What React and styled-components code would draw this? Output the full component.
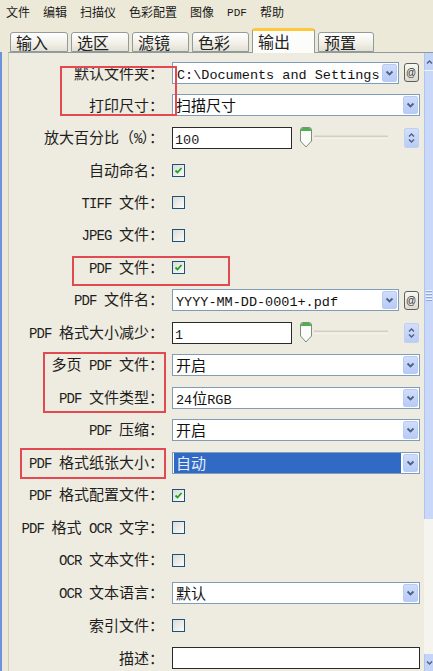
import React from 'react'
import styled, { createGlobalStyle } from 'styled-components'

const Global = createGlobalStyle`
  html, body { margin: 0; padding: 0; background: #ECE9D8; }
  body { width: 433px; height: 671px; overflow: hidden; }
`

const CJK = `"Noto Sans CJK SC", sans-serif`

// page frame
const Page = styled.div`
  position: relative;
  width: 433px;
  height: 671px;
  overflow: hidden;
  background: #ECE9D8;
  font-family: ${CJK};
  color: #1a1a1a;
`

const MenuBar = styled.div`
  display: flex;
  align-items: center;
  gap: 13px;
  height: 24px;
  padding: 0 6px;
  font-size: 12px;
`

const MenuItem = styled.span`
  line-height: 24px;
`

const TabStrip = styled.div`
  display: flex;
  align-items: flex-end;
  gap: 3px;
  height: 28px;
  padding-left: 10px;
  position: relative;
  z-index: 2;
`

const Tab = styled.div`
  box-sizing: border-box;
  width: ${p => p.w}px;
  height: ${p => (p.active ? 25 : 20)}px;
  margin-bottom: ${p => (p.active ? -1 : 0)}px;
  padding-left: 5px;
  border: 1px solid #919B9C;
  border-bottom: ${p => (p.active ? 'none' : '1px solid #919B9C')};
  border-top: ${p => (p.active ? '3px solid #FFC83C' : '1px solid #919B9C')};
  border-radius: 3px 3px 0 0;
  background: ${p => (p.active ? '#FCFCFB' : 'linear-gradient(#FFFFFF, #F1EFE6 60%, #E2DFD4)')};
  font-size: 16px;
  line-height: ${p => (p.active ? 20 : 18)}px;
  color: #222;
`

const Frame = styled.div`
  display: flex;
  height: 619px;
  border-left: 2px solid #6E91DE;
`

const Panel = styled.div`
  display: flex;
  flex: 1;
  margin-left: 6px;
  border-top: 1px solid #919B9C;
  border-left: 1px solid #CFCCBE;
  background: #EEEBE0;
`

const Form = styled.div`
  flex: 1;
  display: grid;
  grid-template-columns: 155px 1fr;
  grid-auto-rows: 32.5px;
  column-gap: 8px;
  align-items: center;
  padding: 3.5px 4px 0 0;
`

const Label = styled.div`
  text-align: right;
  white-space: nowrap;
  font-size: 15px;
  line-height: 20px;
  color: #1e1e1e;
`

const Lat = styled.span`
  font-family: "Liberation Mono", monospace;
  font-size: 14px;
  letter-spacing: -0.9px;
`

const ValLat = styled.span`
  font-family: "Liberation Mono", monospace;
  font-size: 13.5px;
`

const Control = styled.div`
  display: flex;
  align-items: center;
  gap: ${p => p.gap || 0}px;
`

const SelectBox = styled.div`
  box-sizing: border-box;
  flex: 1;
  display: flex;
  align-items: center;
  height: 22px;
  padding: 0 1px;
  border: 1px solid #7F9DB9;
  background: #fff;
  overflow: hidden;
`

const SelectText = styled.div`
  flex: 1;
  height: 20px;
  padding-left: ${p => (p.clip ? 3 : 2)}px;
  margin-right: 2px;
  font-size: 15px;
  line-height: 20px;
  white-space: nowrap;
  overflow: hidden;
  background: ${p => (p.selected ? '#316AC5' : 'transparent')};
  color: ${p => (p.selected ? '#E4ECFA' : '#111')};
`

const ArrowBtn = styled.div`
  box-sizing: border-box;
  display: flex;
  align-items: center;
  justify-content: center;
  width: 15px;
  height: 18px;
  border: 1px solid #B9CBF3;
  border-radius: 2px;
  background: linear-gradient(#D0DDFA, #B8CBF6);
`

const AtBtn = styled.div`
  box-sizing: border-box;
  width: 15px;
  height: 19px;
  margin-right: 1px;
  border: 1px solid #5E5E5E;
  border-radius: 3px;
  background: linear-gradient(#F8F8F4, #DCDACF);
  font-family: "Liberation Sans", sans-serif;
  font-size: 10px;
  line-height: 17px;
  text-align: center;
  color: #333;
`

const TextBox = styled.div`
  box-sizing: border-box;
  width: ${p => (p.w ? `${p.w}px` : '100%')};
  height: 22px;
  padding-left: 2px;
  border: 1px solid #2A2A2A;
  background: #fff;
  font-size: 15px;
  line-height: 20px;
`

const SliderWrap = styled.div`
  display: flex;
  margin-left: 8px;
  width: 92px;
  height: 22px;
`

const Spin = styled.div`
  box-sizing: border-box;
  display: flex;
  flex-direction: column;
  align-items: center;
  justify-content: center;
  gap: 2px;
  width: 15px;
  height: 20px;
  margin-left: auto;
  margin-right: 1px;
  border: 1px solid #BFD0F5;
  border-radius: 2px;
  background: linear-gradient(#D3DFFA, #BACCF5);
`

const Check = styled.div`
  box-sizing: border-box;
  display: flex;
  align-items: center;
  justify-content: center;
  width: 13px;
  height: 13px;
  border: 1px solid #1C5180;
  background: linear-gradient(135deg, #DCDCD4, #FBFBF9);
`

const ScrollBar = styled.div`
  display: flex;
  flex-direction: column;
  width: 10px;
  background: #F5F4EF;
`

const ScrollBtn = styled.div`
  display: flex;
  justify-content: center;
  align-items: center;
  height: 17px;
  background: #C4D4F7;
  border-left: 1px solid #B0C4EF;
`

const Thumb = styled.div`
  display: flex;
  flex-direction: column;
  align-items: center;
  justify-content: center;
  gap: 2px;
  height: 448px;
  margin-top: 1px;
  background: #C9D8F9;
  border-left: 1px solid #AFC3EE;
`

const Grip = styled.div`
  width: 6px;
  height: 1px;
  background: #EEF3FE;
  box-shadow: 0 1px 0 #8EA6DA;
`

const Track = styled.div`
  flex: 1;
`

const Mark = styled.div`
  position: absolute;
  left: ${p => p.x}px;
  top: ${p => p.y}px;
  width: ${p => p.w}px;
  height: ${p => p.h}px;
  border: 2px solid #E04A50;
  box-sizing: border-box;
  z-index: 5;
`

// small drawings
const Chevron = ({ up }) => (
  <svg width="9" height="6" viewBox="0 0 9 6">
    <polyline points={up ? '1.5,5 4.5,2 7.5,5' : '1.5,1.5 4.5,4.5 7.5,1.5'} fill="none" stroke="#4D6185" strokeWidth="1.8" />
  </svg>
)

const SmallChevron = ({ up }) => (
  <svg width="7" height="4" viewBox="0 0 7 4">
    <polyline points={up ? '1,3.5 3.5,1 6,3.5' : '1,0.5 3.5,3 6,0.5'} fill="none" stroke="#4D6185" strokeWidth="1.4" />
  </svg>
)

const Tick = () => (
  <svg width="9" height="9" viewBox="0 0 9 9">
    <polyline points="1.5,4.5 3.5,6.5 7.5,2" fill="none" stroke="#21A121" strokeWidth="1.8" />
  </svg>
)

const SliderArt = () => (
  <svg width="92" height="22" viewBox="0 0 92 22">
    <line x1="14" y1="9.5" x2="88" y2="9.5" stroke="#D2CFC2" strokeWidth="2" />
    <line x1="14" y1="11" x2="88" y2="11" stroke="#FAFAF6" strokeWidth="1" />
    <path d="M0.5 3 Q0.5 0.5 3 0.5 H9 Q11.5 0.5 11.5 3 V14 L6 20 L0.5 14 Z" fill="#FBFBF8" stroke="#7D8E7D" />
    <path d="M1 3 Q1 1 3 1 H9 Q11 1 11 3 V4 H1 Z" fill="#4DB04F" />
  </svg>
)

const mix = (text, Wrap) =>
  text.split(/([A-Za-z0-9%:\\+.\- ]+)/).map((part, i) =>
    /[A-Za-z0-9%]/.test(part) ? <Wrap key={i}>{part}</Wrap> : part
  )

function Select({ value, at, selected, clip }) {
  return (
    <Control gap={5}>
      <SelectBox>
        <SelectText selected={selected} clip={clip}>{mix(value, ValLat)}</SelectText>
        <ArrowBtn><Chevron /></ArrowBtn>
      </SelectBox>
      {at && <AtBtn>@</AtBtn>}
    </Control>
  )
}

function NumberField({ value }) {
  return (
    <Control>
      <TextBox w={120}><ValLat>{value}</ValLat></TextBox>
      <SliderWrap><SliderArt /></SliderWrap>
      <Spin><SmallChevron up /><SmallChevron /></Spin>
    </Control>
  )
}

const rows = [
  { label: '默认文件夹：', kind: 'select', value: 'C:\\Documents and Settings', at: true, clip: true },
  { label: '打印尺寸：', kind: 'select', value: '扫描尺寸' },
  { label: '放大百分比（%）：', kind: 'number', value: '100' },
  { label: '自动命名：', kind: 'check', checked: true },
  { label: 'TIFF 文件：', kind: 'check' },
  { label: 'JPEG 文件：', kind: 'check' },
  { label: 'PDF 文件：', kind: 'check', checked: true },
  { label: 'PDF 文件名：', kind: 'select', value: 'YYYY-MM-DD-0001+.pdf', at: true },
  { label: 'PDF 格式大小减少：', kind: 'number', value: '1' },
  { label: '多页 PDF 文件：', kind: 'select', value: '开启' },
  { label: 'PDF 文件类型：', kind: 'select', value: '24位RGB' },
  { label: 'PDF 压缩：', kind: 'select', value: '开启' },
  { label: 'PDF 格式纸张大小：', kind: 'select', value: '自动', selected: true },
  { label: 'PDF 格式配置文件：', kind: 'check', checked: true },
  { label: 'PDF 格式 OCR 文字：', kind: 'check' },
  { label: 'OCR 文本文件：', kind: 'check' },
  { label: 'OCR 文本语言：', kind: 'select', value: '默认' },
  { label: '索引文件：', kind: 'check' },
  { label: '描述：', kind: 'text', value: '' },
]

const menus = ['文件', '编辑', '扫描仪', '色彩配置', '图像', 'PDF', '帮助']

const tabs = [
  { name: '输入', w: 58 },
  { name: '选区', w: 58 },
  { name: '滤镜', w: 57 },
  { name: '色彩', w: 57 },
  { name: '输出', w: 63, active: true },
  { name: '预置', w: 56 },
]

function renderControl(row) {
  if (row.kind === 'select') return <Select {...row} />
  if (row.kind === 'number') return <NumberField value={row.value} />
  if (row.kind === 'check') return <Control><Check>{row.checked && <Tick />}</Check></Control>
  return <Control><TextBox>{row.value}</TextBox></Control>
}

export default function App() {
  return (
    <Page>
      <Global />
      <MenuBar>
        {menus.map(m => (
          <MenuItem key={m}>{m === 'PDF' ? <Lat style={{ fontSize: 11, letterSpacing: 0 }}>PDF</Lat> : m}</MenuItem>
        ))}
      </MenuBar>
      <TabStrip>
        {tabs.map(t => (
          <Tab key={t.name} w={t.w} active={t.active}>{t.name}</Tab>
        ))}
      </TabStrip>
      <Frame>
        <Panel>
          <Form>
            {rows.map(row => (
              <React.Fragment key={row.label}>
                <Label>{mix(row.label, Lat)}</Label>
                {renderControl(row)}
              </React.Fragment>
            ))}
          </Form>
          <ScrollBar>
            <ScrollBtn><SmallChevron up /></ScrollBtn>
            <Thumb><Grip /><Grip /><Grip /><Grip /></Thumb>
            <Track />
            <ScrollBtn><SmallChevron /></ScrollBtn>
          </ScrollBar>
        </Panel>
      </Frame>
      <Mark x={60} y={66} w={117} h={50} />
      <Mark x={72} y={256} w={158} h={30} />
      <Mark x={43} y={352} w={123} h={61} />
      <Mark x={20} y={448} w={146} h={31} />
    </Page>
  )
}
